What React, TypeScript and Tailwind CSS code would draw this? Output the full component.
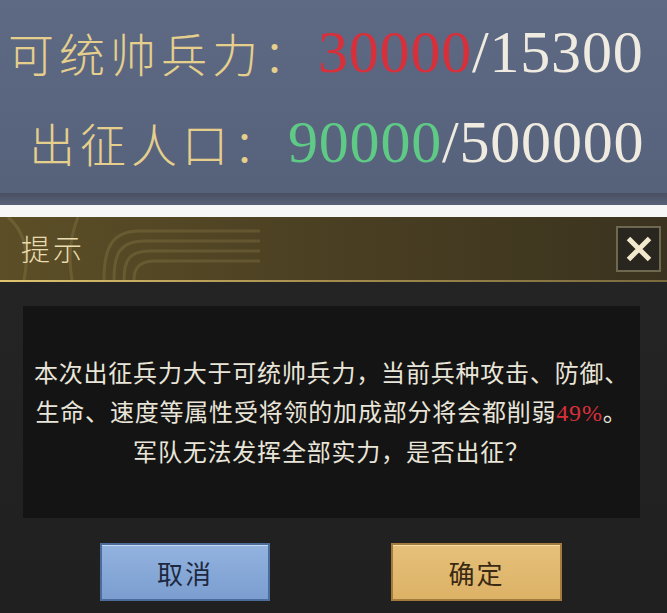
import React from "react";

const cjk = { fontFamily: '"Noto Sans CJK SC", "Noto Sans CJK JP", sans-serif' };
const serif = { fontFamily: '"Liberation Serif", "DejaVu Serif", serif' };

const StatRow = ({
  label,
  value,
  total,
  valueColor,
  indent,
}: {
  label: string;
  value: string;
  total: string;
  valueColor: string;
  indent: string;
}) => (
  <div className={`flex h-[60px] items-center ${indent}`}>
    <span className="text-[46px] font-light leading-none tracking-[5px] text-[#e6cf8c]" style={cjk}>
      {label}
    </span>
    <span className="ml-[4px] flex items-center text-[60px] leading-none tracking-[0.8px]" style={serif}>
      <span className={valueColor}>{value}</span>
      <span className="text-[#efebe0]">/{total}</span>
    </span>
  </div>
);

export default function App() {
  return (
    <div className="flex h-[613px] w-[667px] flex-col overflow-hidden bg-[#232323]">
      {/* Stats panel */}
      <div className="flex h-[193px] flex-col gap-[30px] bg-gradient-to-b from-[#5e6a84] via-[#5a6680] to-[#56627a] pt-[22px]">
        <StatRow label="可统帅兵力：" value="30000" total="15300" valueColor="text-[#d8303a]" indent="pl-[8px]" />
        <StatRow label="出征人口：" value="90000" total="500000" valueColor="text-[#5fca86]" indent="pl-[29px]" />
      </div>
      <div className="h-[12px] bg-gradient-to-b from-[#4a5063] to-[#566077]" />
      <div className="h-[12px] bg-[#f6f6f6]" />

      {/* Dialog title bar */}
      <div className="relative flex h-[65px] flex-col bg-gradient-to-r from-[#5c4f27] via-[#4a3f22] to-[#3b331f]">
        <svg className="absolute left-0 top-0 h-[63px] w-[260px] opacity-15" viewBox="0 0 260 63" fill="none" stroke="#d8c07a" strokeWidth="3">
          <path d="M104 63 C 104 30, 112 14, 140 14 L 260 14" />
          <path d="M114 63 C 114 36, 120 24, 145 24 L 260 24" />
          <path d="M124 63 C 124 42, 130 34, 150 34 L 260 34" />
          <path d="M134 63 C 134 50, 140 44, 156 44 L 260 44" />
          <path d="M78 0 C 70 20, 68 40, 72 63" />
          <path d="M8 0 C 24 14, 30 34, 24 63" />
        </svg>
        <div className="relative flex flex-1 items-center pl-[21px] pr-[6px]">
          <span className="text-[29px] font-light leading-none tracking-[3px] text-[#eadcae]" style={cjk}>
            提示
          </span>
          <div className="ml-auto flex h-[46px] w-[45px] items-center justify-center border-2 border-[#6f6850] bg-[#29251f]">
            <svg viewBox="0 0 24 24" className="h-[30px] w-[30px]" stroke="#f2e9cc" strokeWidth="4" strokeLinecap="square">
              <path d="M5 5 L19 19 M19 5 L5 19" />
            </svg>
          </div>
        </div>
        <div className="h-[2px] bg-gradient-to-r from-[#e0c470] via-[#a48c4c] to-[#7a6a3e]" />
      </div>

      {/* Dialog body */}
      <div className="flex flex-1 flex-col bg-gradient-to-b from-[#242424] to-[#202020] pl-[23px] pr-[27px] pt-[24px]">
        <div
          className="flex h-[212px] flex-col items-center justify-center bg-[#141414] text-[24px] leading-[38.5px] tracking-[0.8px] text-[#e9e5d9]"
          style={cjk}
        >
          <p>本次出征兵力大于可统帅兵力，当前兵种攻击、防御、</p>
          <p>
            生命、速度等属性受将领的加成部分将会都削弱
            <span className="text-[#d8303a]" style={serif}>49%</span>。
          </p>
          <p>军队无法发挥全部实力，是否出征？</p>
        </div>

        <div className="mt-[25px] flex">
          <button
            className="ml-[77px] flex h-[58px] w-[170px] items-center justify-center border-2 border-[#4c6c9c] bg-gradient-to-b from-[#93b3df] to-[#7b9ed0] text-[26px] tracking-[2px] text-[#1d2940] shadow-[inset_0_1px_0_#c9dcf5]"
            style={cjk}
          >
            取消
          </button>
          <button
            className="ml-[121px] flex h-[58px] w-[171px] items-center justify-center border-2 border-[#a37c3c] bg-gradient-to-b from-[#e6c07a] to-[#dcb266] text-[26px] tracking-[2px] text-[#3a2a14] shadow-[inset_0_1px_0_#f6dfa8]"
            style={cjk}
          >
            确定
          </button>
        </div>
      </div>
    </div>
  );
}
